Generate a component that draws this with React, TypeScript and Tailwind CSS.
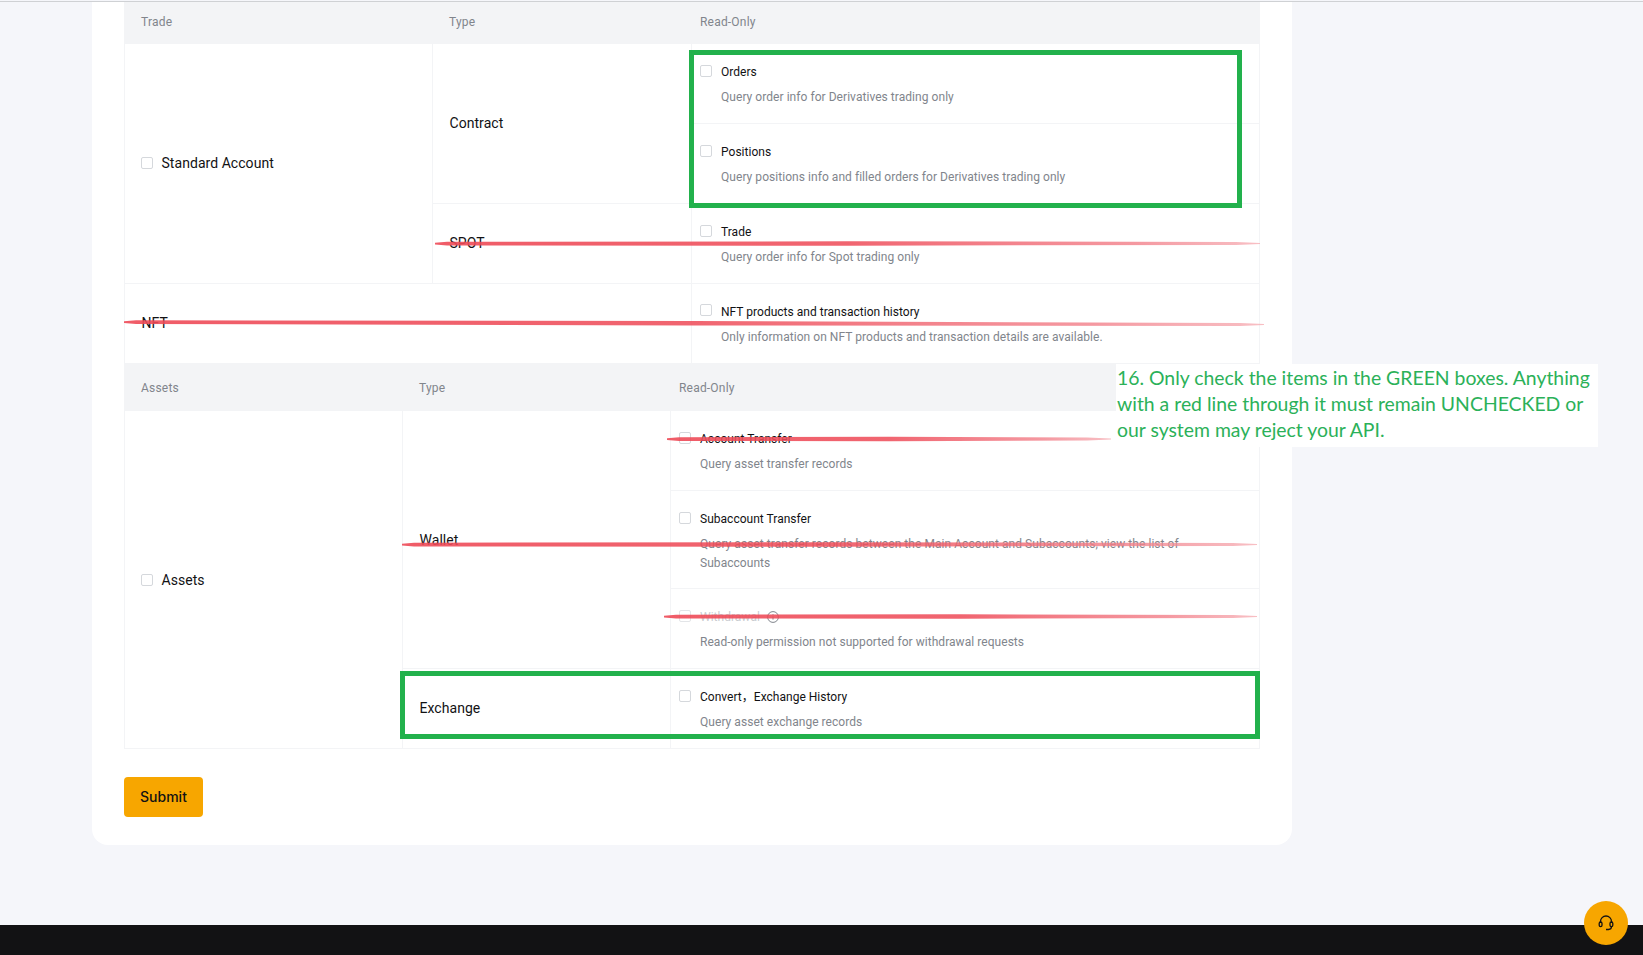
import React from "react";

const Box = ({ disabled }: { disabled?: boolean }) => (
  <span className={`block w-3 h-3 shrink-0 rounded-[2px] border ${disabled ? "border-[#e3e5e8]" : "border-[#d5d8dc]"} bg-white`} />
);

const Perm = ({ label, desc, last, disabled, info, high }: { label: string; desc: React.ReactNode; last?: boolean; disabled?: boolean; info?: boolean; high?: boolean }) => (
  <div className={`h-full pl-2 pr-4 pt-[18px] ${last ? "" : "border-b border-[#f3f4f6]"}`}>
    <div className="flex items-start gap-[9px] h-5">
      <span className={high ? "pt-[2px]" : "pt-[3px]"}><Box disabled={disabled} /></span>
      <span className={`text-[12px] leading-5 tracking-[0.02px] ${disabled ? "text-[#c9ccd1]" : "text-[#121214]"}`}>{label}</span>
      {info && (
        <svg width="12" height="12" viewBox="0 0 12 12" fill="none" className="mt-1 -ml-[2px] text-[#81858c]">
          <circle cx="6" cy="6" r="5.4" stroke="currentColor" />
          <path d="M6 3.2v.9M6 5.2v3.4" stroke="currentColor" />
        </svg>
      )}
    </div>
    <p className="mt-[6px] pl-[21px] text-[12px] leading-[19px] tracking-[0.05px] text-[#81858c]">{desc}</p>
  </div>
);

const Center = ({ children, className = "" }: { children: React.ReactNode; className?: string }) => (
  <div className={`flex items-center pl-[16.5px] text-[14px] tracking-[0.05px] text-[#121214] ${className}`}>{children}</div>
);

const Check = ({ label }: { label: string }) => (
  <span className="-ml-[0.5px] flex items-center gap-[9px]"><span className="-mt-px"><Box /></span><span className="-ml-[0.5px]">{label}</span></span>
);

const Head = ({ cols, className }: { cols: string[]; className: string }) => (
  <div className={`grid items-center bg-[#f3f4f6] text-[12px] tracking-[0.2px] text-[#81858c] ${className}`}>
    <span className="pl-[17px]">{cols[0]}</span>
    <span className="pl-4">{cols[1]}</span>
    <span className="pl-2">{cols[2]}</span>
  </div>
);

const Stroke = ({ x1, x2, y, y2 }: { x1: number; x2: number; y: number; y2?: number }) => {
  const e = y2 ?? y;
  const m = (y + e) / 2;
  return (
    <polygon
      fill="url(#red)"
      points={`${x1},${y - 0.8} ${x1 + 12},${y - 1.8} ${(x1 + x2) / 2},${m - 2.2} ${x2 - 24},${e - 1.6} ${x2},${e - 0.4} ${x2},${e + 0.6} ${x2 - 24},${e + 1.4} ${(x1 + x2) / 2},${m + 2.2} ${x1 + 12},${y + 2} ${x1},${y + 1}`}
    />
  );
};

export default function App() {
  return (
    <div className="relative h-[955px] overflow-hidden bg-[#f5f6fa] font-['Roboto','Noto_Sans_CJK_SC',sans-serif]">
      <div className="mt-px h-px bg-[#cfd1d4]" />
      <main className="ml-[92px] w-[1200px] bg-white rounded-b-2xl px-8 pb-7">
        <Head cols={["Trade", "Type", "Read-Only"]} className="h-[42px] pb-[3px] grid-cols-[309px_259px_1fr]" />
        <section className="grid grid-cols-[308px_259px_1fr] grid-rows-[80px_80px_80px_79px] border-l border-r border-[#f3f4f6]">
          <Center className="row-span-3 border-r border-b border-[#f3f4f6]"><Check label="Standard Account" /></Center>
          <Center className="row-span-2 border-r border-b border-[#f3f4f6]">Contract</Center>
          <Perm label="Orders" desc="Query order info for Derivatives trading only" />
          <Perm label="Positions" desc="Query positions info and filled orders for Derivatives trading only" />
          <Center className="border-r border-b border-[#f3f4f6]">SPOT</Center>
          <Perm label="Trade" desc="Query order info for Spot trading only" />
          <Center className="col-span-2 border-r border-[#f3f4f6]">NFT</Center>
          <Perm last high label="NFT products and transaction history" desc="Only information on NFT products and transaction details are available." />
        </section>
        <Head cols={["Assets", "Type", "Read-Only"]} className="h-[48px] pt-px grid-cols-[279px_268px_1fr]" />
        <section className="grid grid-cols-[278px_268px_1fr] grid-rows-[80px_98px_80px_79px] border-l border-r border-b border-[#f3f4f6]">
          <Center className="row-span-4 pt-px border-r border-[#f3f4f6]"><Check label="Assets" /></Center>
          <Center className="row-span-3 pt-px border-r border-b border-[#f3f4f6]">Wallet</Center>
          <Perm label="Account Transfer" desc="Query asset transfer records" />
          <Perm label="Subaccount Transfer" desc={<>Query asset transfer records between the Main Account and Subaccounts; view the list of<br />Subaccounts</>} />
          <Perm disabled info label="Withdrawal" desc="Read-only permission not supported for withdrawal requests" />
          <Center className="border-r border-[#f3f4f6]">Exchange</Center>
          <Perm last label="Convert，Exchange History" desc="Query asset exchange records" />
        </section>
        <button className="mt-7 block h-10 w-[79px] rounded bg-[#f7a600] pb-px font-['Inter',sans-serif] text-[14px] font-medium text-[#121214]">Submit</button>
      </main>
      <footer className="mt-20 h-[30px] bg-[#121214]" />

      {/* annotation overlays */}
      <svg className="absolute inset-0 pointer-events-none" width="1643" height="955" viewBox="0 0 1643 955" fill="none">
        <defs>
          <linearGradient id="red" x1="0" x2="1" y1="0" y2="0">
            <stop offset="0" stopColor="#ee4a57" stopOpacity="0.9" />
            <stop offset="0.5" stopColor="#ee4a57" stopOpacity="0.85" />
            <stop offset="0.85" stopColor="#f27f89" stopOpacity="0.8" />
            <stop offset="1" stopColor="#f5a3aa" stopOpacity="0.7" />
          </linearGradient>
        </defs>
        <Stroke x1={435} x2={1260} y={243.5} />
        <Stroke x1={124} x2={1264} y={322} y2={324.5} />
        <Stroke x1={667} x2={1111} y={439} />
        <Stroke x1={402} x2={1257} y={544.5} />
        <Stroke x1={664} x2={1257} y={616.5} />
      </svg>
      <div className="absolute left-[689px] top-[50px] w-[553px] h-[158px] border-[5px] border-[#22b14c]" />
      <div className="absolute left-[400px] top-[671px] w-[860px] h-[68px] border-[5px] border-[#22b14c]" />
      <div className="absolute left-[1116px] top-[364px] w-[482px] h-[83px] bg-white pl-[1px] pt-[1px] font-['Lato',sans-serif] text-[19.4px] leading-[26px] text-[#2bb159] whitespace-nowrap">
        16. Only check the items in the GREEN boxes. Anything<br />
        with a red line through it must remain UNCHECKED or<br />
        our system may reject your API.
      </div>
      <div className="absolute left-[1584px] top-[901px] flex h-11 w-11 items-center justify-center rounded-full bg-[#f7a600]">
        <svg width="16" height="16" viewBox="0 0 16 16" fill="none" stroke="#121214" strokeWidth="1.3">
          <path d="M2.5 8V6.5a5.5 5.5 0 0 1 11 0V8" />
          <rect x="1.2" y="7" width="2.8" height="4.6" rx="1.4" />
          <rect x="12" y="7" width="2.8" height="4.6" rx="1.4" />
          <path d="M13.5 11.6c0 1.8-1.4 2.9-3 2.9H8" />
        </svg>
      </div>
    </div>
  );
}
